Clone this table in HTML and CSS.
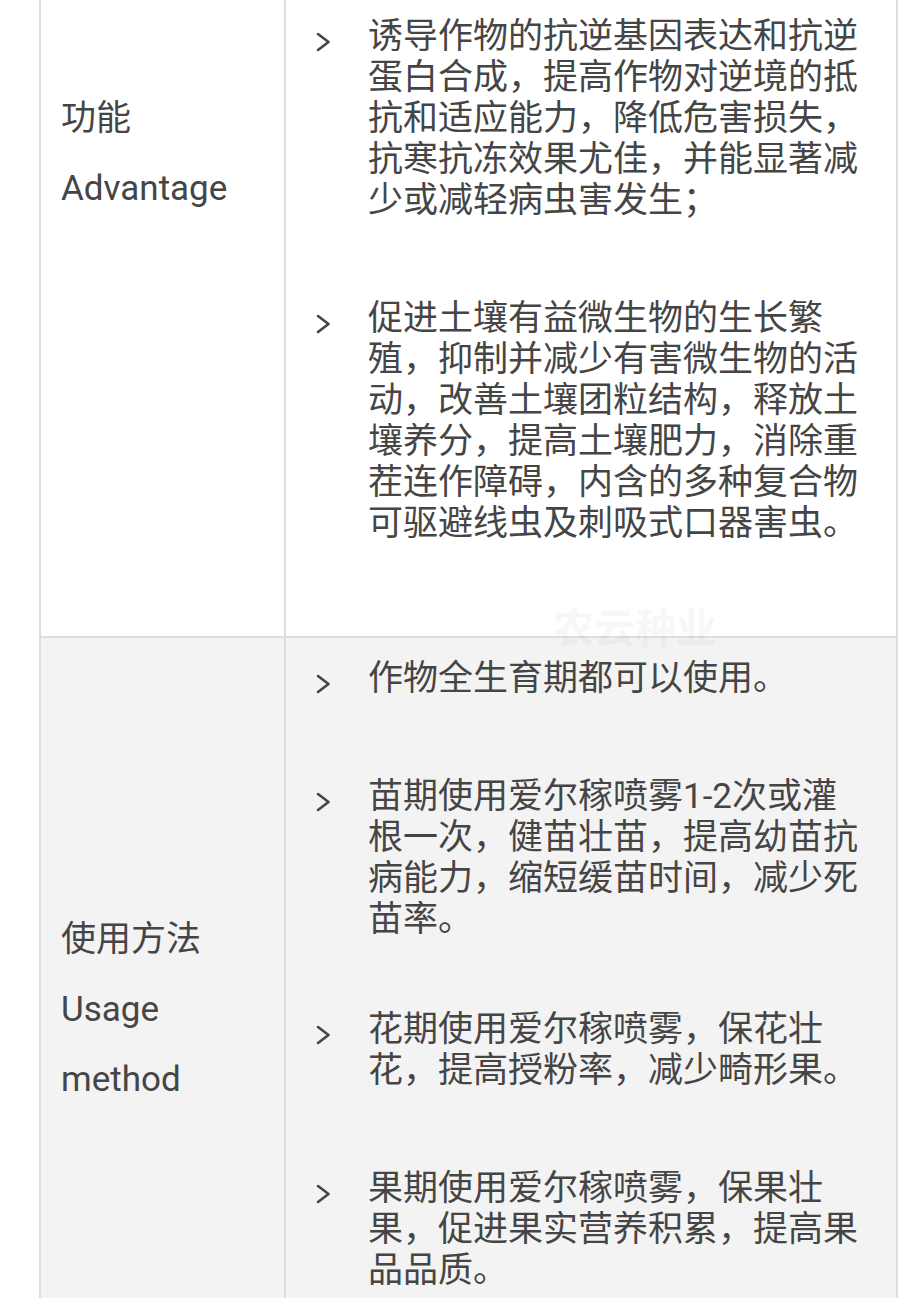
FILE: index.html
```html
<!DOCTYPE html>
<html lang="zh-CN">
<head>
    <meta charset="UTF-8">
    <meta name="viewport" content="width=device-width, initial-scale=1.0">
    <title>爱尔稼 产品说明</title>
    <link rel="stylesheet" href="styles.css">
</head>
<body>
    <div class="spec">
        <div class="row row-first">
            <div class="label label-advantage">
                <div>功能</div>
                <div>Advantage</div>
            </div>
            <div class="content">
                <div class="item">
                    <span class="arrow"><svg width="15" height="20" viewBox="0 0 15 20"><polyline points="2,2 12.5,10 2,18" /></svg></span>
                    <p>诱导作物的抗逆基因表达和抗逆蛋白合成，提高作物对逆境的抵抗和适应能力，降低危害损失，抗寒抗冻效果尤佳，并能显著减少或减轻病虫害发生；</p>
                </div>
                <div class="item">
                    <span class="arrow"><svg width="15" height="20" viewBox="0 0 15 20"><polyline points="2,2 12.5,10 2,18" /></svg></span>
                    <p>促进土壤有益微生物的生长繁殖，抑制并减少有害微生物的活动，改善土壤团粒结构，释放土壤养分，提高土壤肥力，消除重茬连作障碍，内含的多种复合物可驱避线虫及刺吸式口器害虫。</p>
                </div>
            </div>
        </div>
        <div class="row row-grey">
            <div class="label label-usage">
                <div>使用方法</div>
                <div>Usage</div>
                <div>method</div>
            </div>
            <div class="content">
                <div class="item">
                    <span class="arrow"><svg width="15" height="20" viewBox="0 0 15 20"><polyline points="2,2 12.5,10 2,18" /></svg></span>
                    <p>作物全生育期都可以使用。</p>
                </div>
                <div class="item item-tight">
                    <span class="arrow"><svg width="15" height="20" viewBox="0 0 15 20"><polyline points="2,2 12.5,10 2,18" /></svg></span>
                    <p>苗期使用爱尔稼喷雾1-2次或灌根一次，健苗壮苗，提高幼苗抗病能力，缩短缓苗时间，减少死苗率。</p>
                </div>
                <div class="item">
                    <span class="arrow"><svg width="15" height="20" viewBox="0 0 15 20"><polyline points="2,2 12.5,10 2,18" /></svg></span>
                    <p>花期使用爱尔稼喷雾，保花壮花，提高授粉率，减少畸形果。</p>
                </div>
                <div class="item">
                    <span class="arrow"><svg width="15" height="20" viewBox="0 0 15 20"><polyline points="2,2 12.5,10 2,18" /></svg></span>
                    <p>果期使用爱尔稼喷雾，保果壮果，促进果实营养积累，提高果品品质。</p>
                </div>
            </div>
        </div>
        <div class="watermark">农云种业</div>
    </div>
</body>
</html>
```

FILE: styles.css
```css
body {
    margin: 0;
    padding: 0;
    background: #fff;
    font-family: Roboto, "Noto Sans CJK SC", sans-serif;
    color: #454545;
    overflow: hidden;
}

/* Tabelle mit zwei Spalten */
.spec {
    position: relative;
    width: 859px;
    margin-left: 39px;
    box-sizing: border-box;
    border-left: 2px solid #dedede;
    border-right: 2px solid #dedede;
}

.row {
    display: flex;
}

.row-first {
    border-bottom: 2px solid #dedede;
}

.row-grey {
    background-color: #f3f3f3;
}

.label {
    width: 245px;
    flex-shrink: 0;
    box-sizing: border-box;
    border-right: 2px solid #dedede;
    padding-left: 20px;
    font-size: 35px;
    line-height: 70px;
}

.label-advantage {
    padding-top: 84px;
}

.label-usage {
    padding-top: 267px;
}

.content {
    flex: 1;
    padding: 20px 30px 15px 30px;
}

.row-first .content {
    padding-top: 16px;
}

.item {
    display: flex;
    margin-bottom: 77px;
}

.item-tight {
    margin-bottom: 69px;
}

.item p {
    margin: 0;
    width: 496px;
    font-size: 35px;
    line-height: 41px;
}

.arrow {
    width: 52px;
    flex-shrink: 0;
    padding-top: 16px;
}

.arrow svg {
    display: block;
}

.arrow polyline {
    fill: none;
    stroke: #444;
    stroke-width: 2.6;
    stroke-linecap: round;
    stroke-linejoin: round;
}

/* Wasserzeichen */
.watermark {
    position: absolute;
    left: 512px;
    top: 595px;
    font-size: 41px;
    font-weight: bold;
    color: rgba(0, 0, 0, 0.05);
    pointer-events: none;
}
```
